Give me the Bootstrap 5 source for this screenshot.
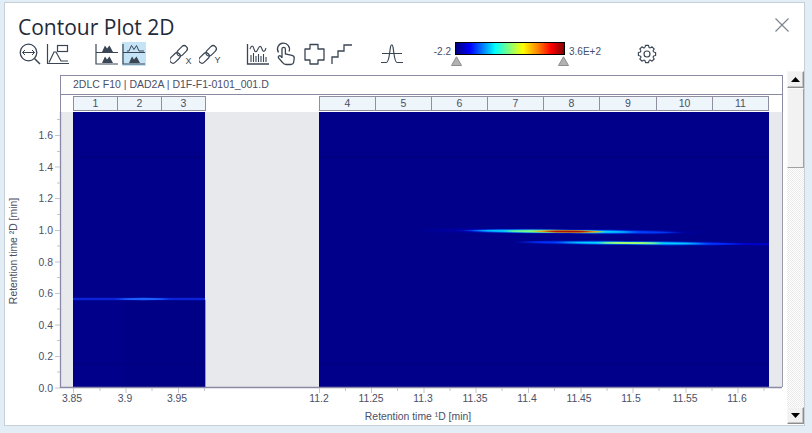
<!DOCTYPE html>
<html lang="en">
<head>
<meta charset="utf-8">
<title>Contour Plot 2D</title>
<link href="https://cdn.jsdelivr.net/npm/bootstrap@5.3.0/dist/css/bootstrap.min.css" rel="stylesheet">
<style>
html,body{height:100%;overflow:hidden}
body{background:#e2edf5;font-family:"Liberation Sans",Arial,sans-serif;color:#4a4f66}
.app-win{width:801px;height:424px;margin:2px 0 0 4px;background:#fff;border:1px solid #c6d0d8}
.app-title{height:38px;padding:11px 14px 0 13px;flex:none}
.app-title h1{font-family:"Open Sans","Noto Sans",sans-serif;font-size:21px;line-height:26px;margin:0;color:#1f2a38;font-weight:400}
.close-x{width:16px;height:16px;margin-top:3px}
.tool-row{height:30px;padding-left:13px;flex:none}
.tool-ico{width:24px;height:24px;display:block;flex:none;margin-top:1px}
.tool-on{background:#c5e3f6}
.w3{margin-left:3px}.w4{margin-left:4px}.w5{margin-left:5px}.w26{margin-left:26px}.w23{margin-left:23px}.w24{margin-left:24px}
.cbar-wrap{margin-left:23px;width:190px;height:30px}
.cbar-lab{font-size:10px;line-height:12px;color:#44506a;width:24px;margin-top:5px}
.cbar-track{width:110px;margin:1px 4px 0 4px}
.cbar{height:13px;border:1px solid #000;background:linear-gradient(90deg,#00007f 0%,#0000ff 13%,#00a0ff 28%,#00ffff 36%,#7fff7f 49%,#ffff00 62%,#ff8000 76%,#ff0000 88%,#7f0000 100%)}
.cbar-tris{height:10px;padding:1px 0 0 0;margin:0 -4px}
.gear{width:20px;height:20px;margin:3px 0 0 20px;flex:none}
.plot-row{height:349px;margin-top:4px;flex:none}
.plot-side{width:55px;flex:none}
.plot-main{width:723px;flex:none}
.plot-title{height:20px;border:1px solid #8a8aa3;font-size:10.5px;line-height:17px;padding-left:12px;color:#4a4f66}
.seg-row{height:17px;padding:1px 0 1px 12px;border-left:1px solid #8a8aa3;border-right:1px solid #8a8aa3}
.seg-cell{background:#eef5fb;border:1px solid #8f8f9f;border-left-width:0;height:15px;font-size:10.5px;line-height:13px;text-align:center;color:#4a4f66}
.seg-first{border-left-width:1px}
.seg-gap{width:113px;flex:none}
.plot-svg{display:block;width:791px;height:312px;margin-left:-55px}
.plot-svg text{font-family:"Liberation Sans",Arial,sans-serif;font-size:10.4px;fill:#4a4f66}
.sbar{width:17px;margin-left:4px;margin-top:-4px;height:353px;background-color:#f5f5f5;background-image:repeating-conic-gradient(#fff 0 25%,#e9e9e9 0 50%);background-size:2px 2px;flex:none}
.sbar-btn{height:17px;width:17px;background:#f1f1f1;border:1px solid;border-color:#f6f6f6 #8d8d8d #8d8d8d #f6f6f6;box-shadow:inset -1px -1px 0 #c4c4c4;font-size:0}
.sbar-thumb{height:80px;background:#f2f2f2;border:1px solid;border-color:#fafafa #a0a0a0 #a0a0a0 #fafafa}
</style>
</head>
<body>
<div class="app-win d-flex flex-column">
  <div class="app-title d-flex justify-content-between">
    <h1>Contour Plot 2D</h1>
    <svg class="close-x" viewBox="0 0 16 16"><path d="M1.5 1.5 14.5 14.5M14.5 1.5 1.5 14.5" stroke="#7d8590" stroke-width="1.2" fill="none"/></svg>
  </div>

  <div class="tool-row d-flex align-items-start">
    <svg class="tool-ico" viewBox="0 0 24 24" fill="none" stroke="#3a4654" stroke-width="1.3"><circle cx="10.5" cy="10.5" r="8.3"/><path d="M16.5 16.5 22 22" stroke-width="1.5"/><path d="M4.5 10.5h12M7 8l-2.5 2.500L7 13M14 8l2.500 2.500L14 13" stroke-width="1"/></svg>
    <svg class="tool-ico w3" viewBox="0 0 24 24" fill="none" stroke="#3a4654" stroke-width="1.2"><path d="M2.500 2v19.500H24"/><path d="M4 20.500 9 10h2l5 9h7"/><rect x="12.500" y="3.500" width="10" height="6"/></svg>
    <svg class="tool-ico w26" viewBox="0 0 24 24" fill="none" stroke="#3a4654" stroke-width="1.2"><path d="M1 2v20h22M1 10.500h22"/><path d="M7 10 10 3.500l2 3 2.500-3L18 10zM7 21l3-6.500 2 3 2.500-3L18 21z" fill="#3a4654" stroke="none"/></svg>
    <svg class="tool-ico w3 tool-on" viewBox="0 0 24 24" fill="none" stroke="#3a4654" stroke-width="1.2"><path d="M1 2v20h22M1 10.500h22"/><path d="M5 9h2L9.500 3.500 12 7.500l2.500-4L17 9h5" stroke-width="1"/><path d="M7 21l3-6.500 2 3 2.500-3L18 21z" fill="#3a4654" stroke="none"/></svg>
    <svg class="tool-ico w24" viewBox="0 0 24 24" fill="none" stroke="#3a4654" stroke-width="1.2"><g transform="rotate(-45 10 11)"><rect x="-3" y="7.800" width="12" height="6.400" rx="3.200"/><rect x="7" y="7.800" width="12" height="6.400" rx="3.200"/></g><text x="15.500" y="22" font-size="9" fill="#3a4654" stroke="none" font-family="Liberation Sans">X</text></svg>
    <svg class="tool-ico w5" viewBox="0 0 24 24" fill="none" stroke="#3a4654" stroke-width="1.2"><g transform="rotate(-45 10 11)"><rect x="-3" y="7.800" width="12" height="6.400" rx="3.200"/><rect x="7" y="7.800" width="12" height="6.400" rx="3.200"/></g><text x="15.500" y="21" font-size="9" fill="#3a4654" stroke="none" font-family="Liberation Sans">Y</text></svg>
    <svg class="tool-ico w23" viewBox="0 0 24 24" fill="none" stroke="#3a4654" stroke-width="1.1"><path d="M1.500 2v20h21.500" stroke-width="1.300"/><path d="M4 7c1.500-4 3-4 4 0s2.500 3.500 4 0 3-3.500 4 0 3 3 4-1"/><path d="M5 20v-7M7.500 20v-9M10 20v-6M12.500 20v-8M15 20v-6M17.500 20v-8M20 20v-5"/></svg>
    <svg class="tool-ico w5" viewBox="0 0 24 24" fill="none" stroke="#3a4654" stroke-width="1.300"><path d="M3.500 10.500a6 6 0 1 1 10.500-1"/><path d="M7 16V7a1.700 1.700 0 0 1 3.400 0v5l6.500 1.300c1.500.3 2.500 1.500 2.300 3l-.5 3.700c-.2 1.500-1.300 2.500-3 2.500H11c-1.500 0-2.500-.7-3.300-1.800L3.500 16c-.8-1.500 1-3 2.300-1.800L7 16"/></svg>
    <svg class="tool-ico w3" viewBox="0 0 24 24" fill="none" stroke="#3a4654" stroke-width="1.300"><path d="M8 2.500h8v4.500h6v11h-6v4H8v-4H3V7h5z" stroke-linejoin="round"/></svg>
    <svg class="tool-ico w4" viewBox="0 0 24 24" fill="none" stroke="#3a4654" stroke-width="1.300"><path d="M2 22v-7h6V9h6V3h8"/></svg>
    <svg class="tool-ico w26" viewBox="0 0 24 24" fill="none" stroke="#3a4654" stroke-width="1.200"><path d="M1 20.500H6.500C9 20.500 9.500 11 10.500 5c.5-3 2-3 2.500 0 1 6 1.500 15.500 4 15.500H23M2 11.500h20"/></svg>

    <div class="cbar-wrap d-flex align-items-start">
      <div class="cbar-lab text-end">-2.2</div>
      <div class="cbar-track">
        <div class="cbar"></div>
        <div class="cbar-tris d-flex justify-content-between">
          <svg width="11" height="10" viewBox="0 0 11 10"><path d="M5.500.8 10.500 9.500H.5z" fill="#b2b2b2" stroke="#8e8e8e"/></svg>
          <svg width="11" height="10" viewBox="0 0 11 10"><path d="M5.500.8 10.500 9.500H.5z" fill="#b2b2b2" stroke="#8e8e8e"/></svg>
        </div>
      </div>
      <div class="cbar-lab text-nowrap">3.6E+2</div>
    </div>
    <svg class="gear" viewBox="0 0 24 24" fill="none" stroke="#3a4654" stroke-width="1.400" stroke-linejoin="round">
      <defs><path id="gear-tooth" d="M9.600 4.160 10.180 1.660H13.820L14.400 4.160A8.200 8.200 0 0 1 15.850 4.760"/></defs>
      <circle cx="12" cy="12" r="3.600"/>
      <use href="#gear-tooth"/>
      <use href="#gear-tooth" transform="rotate(45 12 12)"/>
      <use href="#gear-tooth" transform="rotate(90 12 12)"/>
      <use href="#gear-tooth" transform="rotate(135 12 12)"/>
      <use href="#gear-tooth" transform="rotate(180 12 12)"/>
      <use href="#gear-tooth" transform="rotate(225 12 12)"/>
      <use href="#gear-tooth" transform="rotate(270 12 12)"/>
      <use href="#gear-tooth" transform="rotate(315 12 12)"/>
    </svg>
  </div>

  <div class="plot-row d-flex">
    <div class="plot-side"></div>
    <div class="plot-main">
      <div class="plot-title">2DLC F10 | DAD2A | D1F-F1-0101_001.D</div>
      <div class="seg-row d-flex">
        <div class="seg-cell seg-first" style="width:45px">1</div>
        <div class="seg-cell" style="width:44px">2</div>
        <div class="seg-cell" style="width:44px">3</div>
        <div class="seg-gap"></div>
        <div class="seg-cell seg-first" style="width:57px">4</div>
        <div class="seg-cell" style="width:56px">5</div>
        <div class="seg-cell" style="width:56px">6</div>
        <div class="seg-cell" style="width:56px">7</div>
        <div class="seg-cell" style="width:56px">8</div>
        <div class="seg-cell" style="width:57px">9</div>
        <div class="seg-cell" style="width:56px">10</div>
        <div class="seg-cell" style="width:56px">11</div>
      </div>
      <svg class="plot-svg" viewBox="5 112 791 312">
        <defs>
          <filter id="b1" x="-10%" y="-400%" width="120%" height="900%"><feGaussianBlur stdDeviation="3 .4"/></filter>
          <filter id="b2" x="-10%" y="-400%" width="120%" height="900%"><feGaussianBlur stdDeviation="6 .7"/></filter>
          <filter id="b3" x="-10%" y="-400%" width="120%" height="900%"><feGaussianBlur stdDeviation="10 1"/></filter>
          <clipPath id="c2"><rect x="319" y="112" width="450" height="275"/></clipPath>
          <clipPath id="c1"><rect x="73" y="112" width="132" height="275"/></clipPath>
        </defs>
        <rect x="61" y="112" width="721" height="275" fill="#e8e9ec"/>
        <rect x="73" y="112" width="132" height="275" fill="#00008b"/>
        <rect x="319" y="112" width="450" height="275" fill="#00008b"/>
        <g fill="#000080">
          <rect x="73" y="363" width="132" height="1.500"/><rect x="73" y="156" width="132" height="2"/>
          <rect x="319" y="363" width="450" height="1.500"/><rect x="319" y="156" width="450" height="2"/>
          <rect x="126" y="300" width="80" height="87" opacity=".35"/>
        </g>
        <g clip-path="url(#c1)">
          <rect x="60" y="297.800" width="160" height="2.400" fill="#0a20d8" filter="url(#b2)"/>
          <ellipse cx="143" cy="299" rx="24" ry="1.200" fill="#1c60ff" filter="url(#b1)"/>
        </g>
        <g clip-path="url(#c2)">
          <g transform="rotate(.5 570 231.500)">
            <ellipse cx="560" cy="231.500" rx="135" ry="1.100" fill="#0000d8" filter="url(#b3)" opacity=".8"/>
            <ellipse cx="570" cy="231.500" rx="105" ry="1.800" fill="#0040ff" filter="url(#b2)"/>
            <ellipse cx="555" cy="231.500" rx="78" ry="1.400" fill="#00e8ff" filter="url(#b2)"/>
            <ellipse cx="555" cy="231.500" rx="48" ry="1.100" fill="#a0ff60" filter="url(#b1)"/>
            <ellipse cx="568" cy="231.500" rx="33" ry="1" fill="#ff9000" filter="url(#b1)"/>
            <ellipse cx="568" cy="231.500" rx="22" ry=".9" fill="#b01000" filter="url(#b1)"/>
          </g>
          <g transform="rotate(.5 627 243)">
            <rect x="590" y="242.300" width="220" height="1.400" fill="#0000e8" filter="url(#b2)"/>
            <ellipse cx="630" cy="243" rx="110" ry="1.600" fill="#0030ff" filter="url(#b2)"/>
            <ellipse cx="632" cy="243" rx="72" ry="1.300" fill="#00d0ff" filter="url(#b2)"/>
            <ellipse cx="630" cy="243" rx="30" ry="1" fill="#a0ff70" filter="url(#b1)"/>
          </g>
        </g>
        <path d="M60.500 112V387.500H782" fill="none" stroke="#8a8aa8" stroke-width="1.300"/>
        <path d="M782.500 112V387" stroke="#9a9aa8" fill="none"/>
        <g stroke="#c2c4cc">
          <path d="M55 388h5M55 356.500h5M55 325h5M55 293.500h5M55 262h5M55 230.500h5M55 198.500h5M55 167h5M55 135.500h5"/>
          <path d="M57 372h3M57 340.500h3M57 309h3M57 277.500h3M57 246h3M57 214.500h3M57 183h3M57 151.500h3M57 119.500h3"/>
          <path d="M73.500 388v5M126 388v5M178.500 388v5M100 388v3M152 388v3M204.500 388v3"/>
          <path d="M319.500 388v5M371.500 388v5M424 388v5M476 388v5M528.500 388v5M581 388v5M633 388v5M686 388v5M738 388v5"/>
          <path d="M345.500 388v3M397.500 388v3M450 388v3M502 388v3M554.500 388v3M607 388v3M659 388v3M712 388v3M764 388v3"/>
        </g>
        <g text-anchor="end">
          <text x="53" y="391.500">0.0</text><text x="53" y="360">0.2</text><text x="53" y="328.500">0.4</text><text x="53" y="297">0.6</text><text x="53" y="265.500">0.8</text><text x="53" y="234">1.0</text><text x="53" y="202">1.2</text><text x="53" y="171">1.4</text><text x="53" y="139">1.6</text>
        </g>
        <g text-anchor="middle">
          <text x="72" y="402">3.85</text><text x="125" y="402">3.9</text><text x="177" y="402">3.95</text>
          <text x="319" y="402">11.2</text><text x="371" y="402">11.25</text><text x="423" y="402">11.3</text><text x="475" y="402">11.35</text><text x="527" y="402">11.4</text><text x="579" y="402">11.45</text><text x="631" y="402">11.5</text><text x="685" y="402">11.55</text><text x="737" y="402">11.6</text>
        </g>
        <text x="418" y="420" text-anchor="middle">Retention time ¹D [min]</text>
        <text transform="translate(17 251) rotate(-90)" text-anchor="middle">Retention time ²D [min]</text>
      </svg>
    </div>
    <div class="sbar d-flex flex-column">
      <div class="sbar-btn d-flex align-items-center justify-content-center"><svg width="9" height="5" viewBox="0 0 9 5"><path d="M4.500 0 9 5H0z" fill="#000"/></svg></div>
      <div class="sbar-thumb"></div>
      <div class="flex-grow-1"></div>
      <div class="sbar-btn d-flex align-items-center justify-content-center"><svg width="9" height="5" viewBox="0 0 9 5"><path d="M0 0h9L4.500 5z" fill="#000"/></svg></div>
    </div>
  </div>
</div>
<script src="https://cdn.jsdelivr.net/npm/bootstrap@5.3.0/dist/js/bootstrap.bundle.min.js"></script>
</body>
</html>
